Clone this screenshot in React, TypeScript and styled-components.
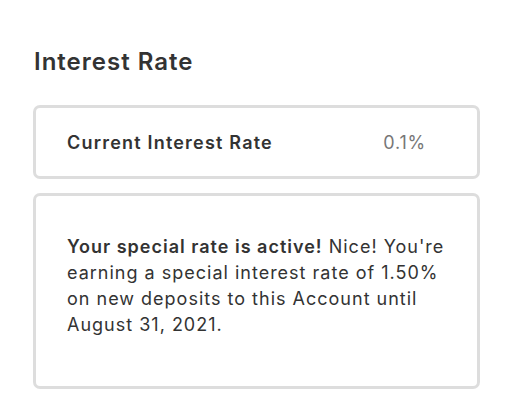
import React from "react";
import styled, { createGlobalStyle } from "styled-components";

const Global = createGlobalStyle`
  html, body { margin: 0; padding: 0; background: #fff; }
  body { font-family: Inter, "Noto Sans", sans-serif; color: #333; }
`;

const Page = styled.div`
  padding: 46px 26px 0 33px;
  width: 506px;
  box-sizing: border-box;
`;

const Title = styled.h2`
  margin: 0 0 27px 1px;
  font-size: 24px;
  line-height: 32px;
  font-weight: 600;
  color: #333;
  letter-spacing: 1px;
`;

const Stack = styled.div`
  display: flex;
  flex-direction: column;
  gap: 14px;
  width: 447px;
`;

const Card = styled.div<{ $tall?: boolean }>`
  box-sizing: border-box;
  border: 3px solid #dddddd;
  border-radius: 7px;
  background: #fff;
  padding: ${(p) => (p.$tall ? "38px 20px 0 31px" : "0 51px 0 31px")};
  height: ${(p) => (p.$tall ? "196px" : "74px")};
  display: flex;
  align-items: ${(p) => (p.$tall ? "flex-start" : "center")};
  justify-content: space-between;
`;

const Label = styled.span`
  font-size: 18px;
  font-weight: 600;
  color: #333;
  letter-spacing: 1.2px;
`;

const Value = styled.span`
  font-size: 18px;
  font-weight: 400;
  color: #777;
  letter-spacing: 0.8px;
`;

const Para = styled.p`
  margin: 0;
  font-size: 18px;
  line-height: 26px;
  color: #333;
  letter-spacing: 1px;
  white-space: nowrap;
  strong { font-weight: 600; }
`;

export default function App() {
  return (
    <>
      <Global />
      <Page>
        <Title>Interest Rate</Title>
        <Stack>
          <Card>
            <Label>Current Interest Rate</Label>
            <Value>0.1%</Value>
          </Card>
          <Card $tall>
            <Para>
              <strong>Your special rate is active!</strong> Nice! You're
              <br />
              earning a special interest rate of 1.50%
              <br />
              on new deposits to this Account until
              <br />
              August 31, 2021.
            </Para>
          </Card>
        </Stack>
      </Page>
    </>
  );
}
